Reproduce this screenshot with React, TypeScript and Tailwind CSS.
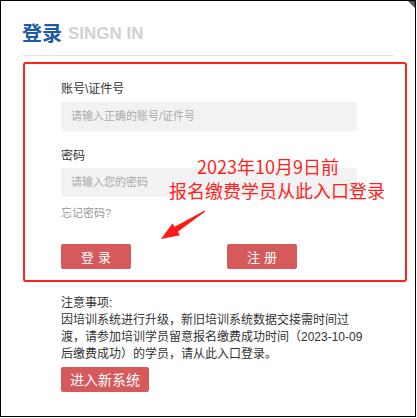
import React from "react";

const cjk = { fontFamily: '"Liberation Sans", "Noto Sans CJK SC", sans-serif' };
const cjkOnly = { fontFamily: '"Noto Sans CJK SC", sans-serif' };

export default function App() {
  return (
    <div className="w-[417px] h-[418px] bg-white" style={cjk}>
      <div className="relative w-[416px] h-[417px] border border-black bg-white overflow-hidden">
        {/* corner shade */}
        <svg className="absolute right-0 top-0" width="7" height="7" viewBox="0 0 7 7">
          <polygon points="0,0 7,0 7,7" fill="#555" />
        </svg>

        {/* header */}
        <div className="flex items-end pl-[21px] pt-[20px] h-[44px]">
          <span className="text-[20px] leading-[24px] font-bold text-[#1c5ca6]" style={cjkOnly}>登录</span>
          <span className="ml-[6px] text-[17px] leading-[20px] font-bold text-[#d2d2d2] mb-[1px]" style={{ fontFamily: '"Liberation Sans", Arial, sans-serif' }}>SINGN IN</span>
        </div>
        <div className="ml-[22px] w-[371px] mt-[10px] border-b border-[#e2e2e2]" />

        {/* red box */}
        <div className="ml-[22px] mt-[6px] w-[384px] h-[220px] border-2 border-[#ff2020] rounded-[3px] pl-[36px] pt-[17px]">
          <div className="text-[12px] leading-[16px] text-[#333]">账号\证件号</div>
          <div className="mt-[5px] w-[296px] h-[29px] bg-[#f2f2f2] flex items-center pl-[10px] text-[11px] text-[#aaaaaa]">
            请输入正确的账号/证件号
          </div>
          <div className="mt-[17px] text-[12px] leading-[16px] text-[#333]">密码</div>
          <div className="mt-[4px] w-[296px] h-[29px] bg-[#f2f2f2] flex items-center pl-[10px] text-[11px] text-[#aaaaaa]">
            请输入您的密码
          </div>
          <div className="mt-[8px] text-[11px] leading-[16px] text-[#999]">忘记密码?</div>
          <div className="mt-[23px] flex">
            <div className="w-[70px] h-[25px] bg-[#d65a5b] rounded-[2px] flex items-center justify-center text-white text-[13px] tracking-[4px] pl-[4px]" style={cjkOnly}>
              登录
            </div>
            <div className="ml-[96px] w-[70px] h-[25px] bg-[#d65a5b] rounded-[2px] flex items-center justify-center text-white text-[13px] tracking-[4px] pl-[4px]" style={cjkOnly}>
              注册
            </div>
          </div>
        </div>

        {/* notes */}
        <div className="pl-[60px] mt-[13px] text-[12px] leading-[17px] text-[#333] whitespace-nowrap">
          <div>注意事项:</div>
          <div>因培训系统进行升级，新旧培训系统数据交接需时间过</div>
          <div>渡，请参加培训学员留意报名缴费成功时间（2023-10-09</div>
          <div>后缴费成功）的学员，请从此入口登录。</div>
          <div className="mt-[4px] w-[88px] h-[25px] bg-[#d65a5b] rounded-[2px] flex items-center justify-center text-white text-[14px]" style={cjkOnly}>
            进入新系统
          </div>
        </div>

        {/* annotation */}
        <div className="absolute left-[168px] top-[153px] w-[216px] text-center text-[18px] leading-[24px] text-[#ff1f1f]" style={cjkOnly}>
          <div className="pr-[18px]">2023年10月9日前</div>
          <div>报名缴费学员从此入口登录</div>
        </div>
        <svg className="absolute left-[150px] top-[200px]" width="70" height="50" viewBox="0 0 70 50">
          <polygon points="10,38 21.4,22.4 23.6,25.8 53.7,9.6 54.3,10.4 26.8,30.8 29,34.2" fill="#ff1a1a" />
        </svg>
      </div>
    </div>
  );
}
